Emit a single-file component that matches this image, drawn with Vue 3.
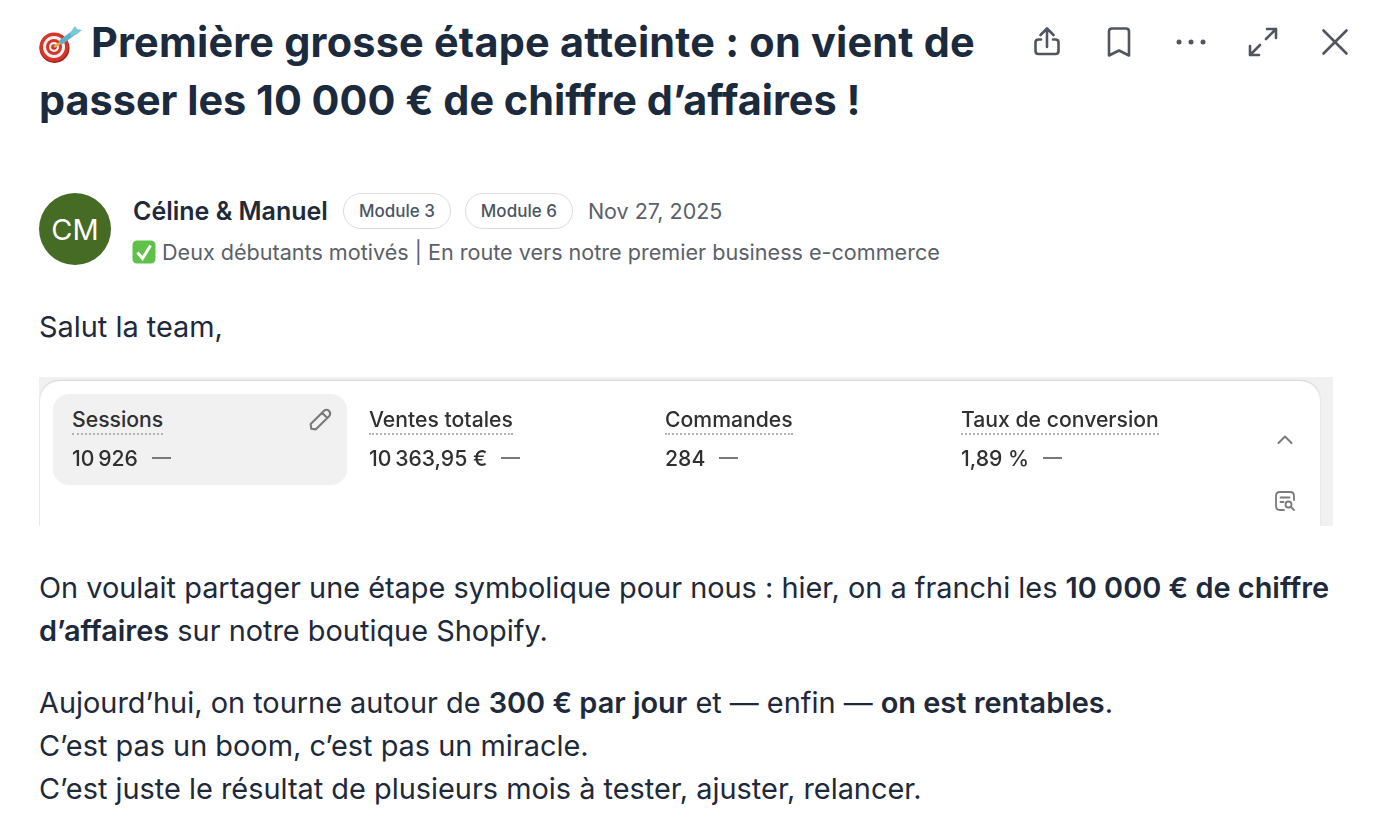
<script setup>
const metrics = [
  { label: 'Sessions', value: '10\u202f926', active: true },
  { label: 'Ventes totales', value: '10\u202f363,95 €' },
  { label: 'Commandes', value: '284' },
  { label: 'Taux de conversion', value: '1,89 %' },
];
</script>

<template>
  <div class="page">
    <header class="head">
      <h1 class="title">
        <svg class="dart" viewBox="0 0 46 40" width="46" height="40">
          <circle cx="16.500" cy="25" r="15" fill="#9c1f19" />
          <circle cx="16" cy="24" r="14.500" fill="#d8352a" />
          <circle cx="16" cy="24" r="11" fill="#f7f3f1" />
          <circle cx="16" cy="24" r="8" fill="#d8352a" />
          <circle cx="16" cy="24" r="5" fill="#f7f3f1" />
          <circle cx="16" cy="24" r="2.800" fill="#c9302a" />
          <path d="M16 24 L25 18" stroke="#d9b23c" stroke-width="2.500" />
          <path d="M24 18.500 L34 11" stroke="#58b3c9" stroke-width="5" stroke-linecap="round" />
          <path d="M32 10 L37 3 L39 6 L44 7 L38 12 L33 13 Z" fill="#7cc8d8" />
        </svg>
        <span class="first-line">Première grosse étape atteinte : on vient de</span> passer les 10 000 € de chiffre d’affaires !
      </h1>
      <div class="tools">
        <svg viewBox="0 0 36 36" class="tool">
          <path d="M18 5 V23 M11.500 11 L18 4.500 L24.500 11 M12 15.500 H9.500 Q6.500 15.500 6.500 18.500 V27 Q6.500 30 9.500 30 H26.500 Q29.500 30 29.500 27 V18.500 Q29.500 15.500 26.500 15.500 H24" />
        </svg>
        <svg viewBox="0 0 36 36" class="tool">
          <path d="M8 31.500 V7.500 Q8 4.500 11 4.500 H25 Q28 4.500 28 7.500 V31.500 L18 26.500 Z" />
        </svg>
        <svg viewBox="0 0 36 36" class="tool">
          <circle cx="6" cy="18" r="2.500" class="dot" />
          <circle cx="18" cy="18" r="2.500" class="dot" />
          <circle cx="30" cy="18" r="2.500" class="dot" />
        </svg>
        <svg viewBox="0 0 36 36" class="tool">
          <path d="M21 15 L31 5 M22 5 H31 V14 M15 21 L5 31 M5 22 V31 H14" />
        </svg>
        <svg viewBox="0 0 36 36" class="tool">
          <path d="M6.500 6.500 L29.500 29.500 M29.500 6.500 L6.500 29.500" />
        </svg>
      </div>
    </header>

    <section class="author">
      <div class="avatar">CM</div>
      <div class="who">
        <div class="who-top">
          <span class="name">Céline &amp; Manuel</span>
          <span class="chip">Module 3</span>
          <span class="chip">Module 6</span>
          <span class="date">Nov 27, 2025</span>
        </div>
        <div class="bio">
          <svg class="check" viewBox="0 0 24 24" width="24" height="24">
            <rect x="0.500" y="0.500" width="23" height="23" rx="4.500" fill="#5fc04a" />
            <path d="M5.500 12.500 L10.500 18.500 L18.500 5.500" fill="none" stroke="#fff" stroke-width="3" />
          </svg>
          <span>Deux débutants motivés | En route vers notre premier business e-commerce</span>
        </div>
      </div>
    </section>

    <p class="hello">Salut la team,</p>

    <div class="shot">
      <div class="card">
        <div class="metrics">
          <div v-for="m in metrics" :key="m.label" class="metric" :class="{ active: m.active }">
            <div class="metric-top">
              <span class="metric-label">{{ m.label }}</span>
              <svg v-if="m.active" class="pencil" viewBox="0 0 24 24" width="28" height="28">
                <path d="M4.500 19.500 L4 15.500 L15.500 4 Q17.500 2.500 19.500 4 L20 4.500 Q21.500 6.500 20 8.500 L8.500 20 Z M14 6 L18 10" />
              </svg>
            </div>
            <div class="metric-value">
              <span>{{ m.value }}</span>
              <i class="dash"></i>
            </div>
          </div>
        </div>
        <div class="side">
          <svg viewBox="0 0 24 24" width="24" height="24" class="side-icon">
            <path d="M5.500 15 L12 8.500 L18.500 15" />
          </svg>
          <svg viewBox="0 0 24 24" width="24" height="24" class="side-icon thin">
            <path d="M11 21 H7 Q3 21 3 17 V7 Q3 3 7 3 H17 Q21 3 21 7 V11 M7.500 8.500 H16.500 M7.500 13 H10.500" />
            <circle cx="15.500" cy="15.500" r="3" />
            <path d="M18 18 L21 21" />
          </svg>
        </div>
      </div>
    </div>

    <div class="body">
      <p>On voulait partager une étape symbolique pour nous : hier, on a franchi les <b>10 000 € de chiffre d’affaires</b> sur notre boutique Shopify.</p>
      <p>Aujourd’hui, on tourne autour de <b>300 € par jour</b> et — enfin — <b>on est rentables</b>.<br />C’est pas un boom, c’est pas un miracle.<br />C’est juste le résultat de plusieurs mois à tester, ajuster, relancer.</p>
    </div>
  </div>
</template>

<style>
html, body {
  background: #fff;
  overflow: hidden;
}
</style>

<style scoped>
.page {
  width: 1378px;
  height: 830px;
  box-sizing: border-box;
  padding: 13px 45px 0 39px;
  font-family: Inter, "Liberation Sans", sans-serif;
  color: #1e293b;
  overflow: hidden;
}

.head {
  display: flex;
  justify-content: space-between;
  align-items: flex-start;
}

.title {
  margin: 0;
  width: 960px;
  font-size: 41.400px;
  line-height: 58px;
  font-weight: 700;
  color: #1c2a3e;
}

.first-line {
  letter-spacing: 0.22px;
}

.dart {
  vertical-align: -6px;
  margin: 0 7px 0 -1px;
}

.tools {
  display: flex;
  gap: 36px;
  padding: 11px 0 0 0;
  margin-right: -20px;
}

.tool {
  width: 36px;
  height: 36px;
  fill: none;
  stroke: #52555f;
  stroke-width: 2.600;
  stroke-linecap: round;
  stroke-linejoin: round;
}

.dot {
  fill: #52555f;
  stroke: none;
}

.author {
  display: flex;
  gap: 22px;
  margin-top: 64px;
}

.avatar {
  width: 72px;
  height: 72px;
  border-radius: 50%;
  background: #456b25;
  color: #fff;
  font-size: 29px;
  display: flex;
  align-items: center;
  justify-content: center;
}

.who-top {
  display: flex;
  align-items: center;
  height: 36px;
}

.name {
  font-size: 25px;
  font-weight: 600;
  margin-right: 1px;
}

.chip {
  height: 36px;
  box-sizing: border-box;
  border: 1px solid #d9dce1;
  border-radius: 18px;
  padding: 0 15px;
  display: flex;
  align-items: center;
  font-size: 17px;
  font-weight: 450;
  color: #4b5563;
  margin-left: 14px;
}

.date {
  margin-left: 15px;
  font-size: 21.500px;
  color: #5b5f6a;
}

.bio {
  margin: 6px 0 0 -1px;
  display: flex;
  align-items: center;
  gap: 6px;
  font-size: 21.580px;
  line-height: 34px;
  color: #5b5f6a;
}

.check {
  flex: none;
}

.hello {
  margin: 36px 0 0;
  font-size: 28.900px;
  line-height: 43px;
}

.shot {
  margin-top: 29px;
  height: 149px;
  background: #f1f1f1;
  padding: 4px 13px 0 1px;
  box-sizing: border-box;
  overflow: hidden;
}

.card {
  height: 200px;
  background: #fff;
  border-radius: 20px 20px 0 0;
  box-shadow: 0 -1px 2px rgba(0, 0, 0, 0.12);
  display: flex;
  padding: 13px 0 0 13px;
  box-sizing: border-box;
  filter: blur(0.3px);
}

.metrics {
  display: flex;
  gap: 2px;
}

.metric {
  width: 294px;
  height: 91px;
  box-sizing: border-box;
  padding: 12px 20px;
  border-radius: 16px;
  color: #303030;
  font-size: 21.200px;
}

.metric.active {
  background: #f1f1f1;
  padding-left: 19px;
}

.metric-top {
  display: flex;
  justify-content: space-between;
  align-items: flex-start;
}

.metric-label {
  font-weight: 500;
  line-height: 26px;
  padding-bottom: 1px;
  border-bottom: 2px dotted #b4b4b4;
}

.pencil {
  fill: none;
  stroke: #7a7a7a;
  stroke-width: 1.800;
  stroke-linejoin: round;
  stroke-linecap: round;
  margin: 0 -7px -5px 0;
}

.metric-value {
  margin-top: 10px;
  display: flex;
  align-items: center;
  gap: 14px;
  font-weight: 500;
  line-height: 26px;
}

.dash {
  width: 19px;
  height: 2.500px;
  background: #7a7a7a;
}

.side {
  flex: 1;
  display: flex;
  flex-direction: column;
  align-items: flex-end;
  gap: 37px;
  padding: 34px 23px 0 0;
}

.side-icon {
  fill: none;
  stroke: #7a7a7a;
  stroke-width: 2;
  stroke-linecap: round;
  stroke-linejoin: round;
}

.side-icon.thin {
  stroke-width: 1.800;
}

.body {
  margin-top: 40px;
  font-size: 28.900px;
  line-height: 43px;
}

.body p {
  margin: 0 0 29px;
}

.body b {
  font-weight: 600;
}
</style>
